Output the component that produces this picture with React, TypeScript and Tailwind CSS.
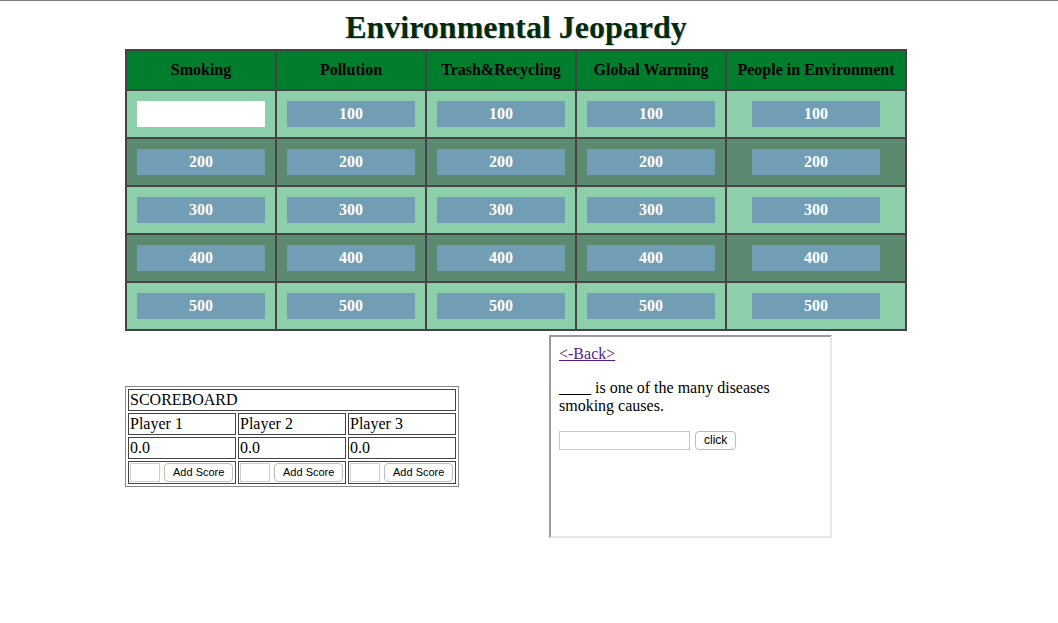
import React from 'react'

const categories = ['Smoking', 'Pollution', 'Trash&Recycling', 'Global Warming', 'People in Environment']
const values = [100, 200, 300, 400, 500]
const players = ['Player 1', 'Player 2', 'Player 3']

const serif = { fontFamily: '"Liberation Serif", "Times New Roman", serif' }
const sans = { fontFamily: '"Liberation Sans", Arial, sans-serif' }

function Tile({ value, used }: { value: number; used?: boolean }) {
  if (used) {
    return <div className="w-[128px] h-[26px] bg-white" />
  }
  return (
    <div className="w-[128px] h-[26px] bg-[#719eb5] text-white font-bold text-[16px] leading-[26px] text-center">
      {value}
    </div>
  )
}

function Board() {
  return (
    <div className="grid grid-cols-[148px_148px_148px_148px_178px] gap-[2px] bg-[#444] border-2 border-[#444] w-[782px]">
      {categories.map((c) => (
        <div key={c} className="h-[38px] bg-[#007e2e] flex items-center justify-center font-bold text-[16px] text-black">
          {c}
        </div>
      ))}
      {values.map((v, r) =>
        categories.map((c, i) => (
          <div
            key={c + v}
            className={`h-[46px] flex items-center justify-center ${r % 2 === 0 ? 'bg-[#8ecfab]' : 'bg-[#5b8a70]'}`}
          >
            <Tile value={v} used={r === 0 && i === 0} />
          </div>
        ))
      )}
    </div>
  )
}

function Scoreboard() {
  const cell = 'border border-[#444] p-[1px] leading-[18px] text-[16px] text-black'
  return (
    <table className="table-fixed w-[334px] border border-[#888] border-separate border-spacing-[2px]">
      <tbody>
        <tr>
          <td colSpan={3} className={cell}>SCOREBOARD</td>
        </tr>
        <tr>
          {players.map((p) => (
            <td key={p} className={cell}>{p}</td>
          ))}
        </tr>
        <tr>
          {players.map((p) => (
            <td key={p} className={cell}>0.0</td>
          ))}
        </tr>
        <tr>
          {players.map((p) => (
            <td key={p} className="border border-[#444] p-[1px]">
              <div className="flex items-center gap-[4px] h-[19px]">
                <input className="w-[30px] h-[19px] shrink-0 border border-[#ccc] bg-white" />
                <button
                  className="h-[19px] shrink-0 whitespace-nowrap px-[8px] rounded-[4px] border border-[#bbb] bg-white text-[11px] leading-[17px] text-black"
                  style={sans}
                >
                  Add Score
                </button>
              </div>
            </td>
          ))}
        </tr>
      </tbody>
    </table>
  )
}

function Question() {
  return (
    <div className="w-[283px] h-[203px] border-2 border-t-[#9a9a9a] border-l-[#9a9a9a] border-r-[#e8e8e8] border-b-[#e8e8e8] bg-white p-[8px] text-[16px] leading-[18px] text-black">
      <a href="#" className="text-[#551a8b] underline">&lt;-Back&gt;</a>
      <p className="mt-[16px]">
        ____ is one of the many diseases
        <br />
        smoking causes.
      </p>
      <div className="mt-[16px] flex items-center gap-[5px]">
        <input className="w-[131px] h-[19px] border border-[#c8c8c8] bg-white" />
        <button
          className="h-[19px] px-[8px] rounded-[4px] border border-[#bbb] bg-white text-[12px] leading-[17px] text-black"
          style={sans}
        >
          click
        </button>
      </div>
    </div>
  )
}

export default function App() {
  return (
    <div className="w-[1058px] h-[623px] bg-white" style={serif}>
      <div className="h-px bg-[#7a7a7a]" />
      <div className="ml-[125px] w-[782px]">
        <h1 className="pt-[8px] pb-[3px] text-center text-[32px] leading-[37px] font-bold text-[#002b0d] [text-shadow:1px_1px_1px_#d0d0d0]">
          Environmental Jeopardy
        </h1>
        <Board />
        <div className="flex items-start">
          <div className="mt-[55px]">
            <Scoreboard />
          </div>
          <div className="ml-[90px] mt-[4px]">
            <Question />
          </div>
        </div>
      </div>
    </div>
  )
}
